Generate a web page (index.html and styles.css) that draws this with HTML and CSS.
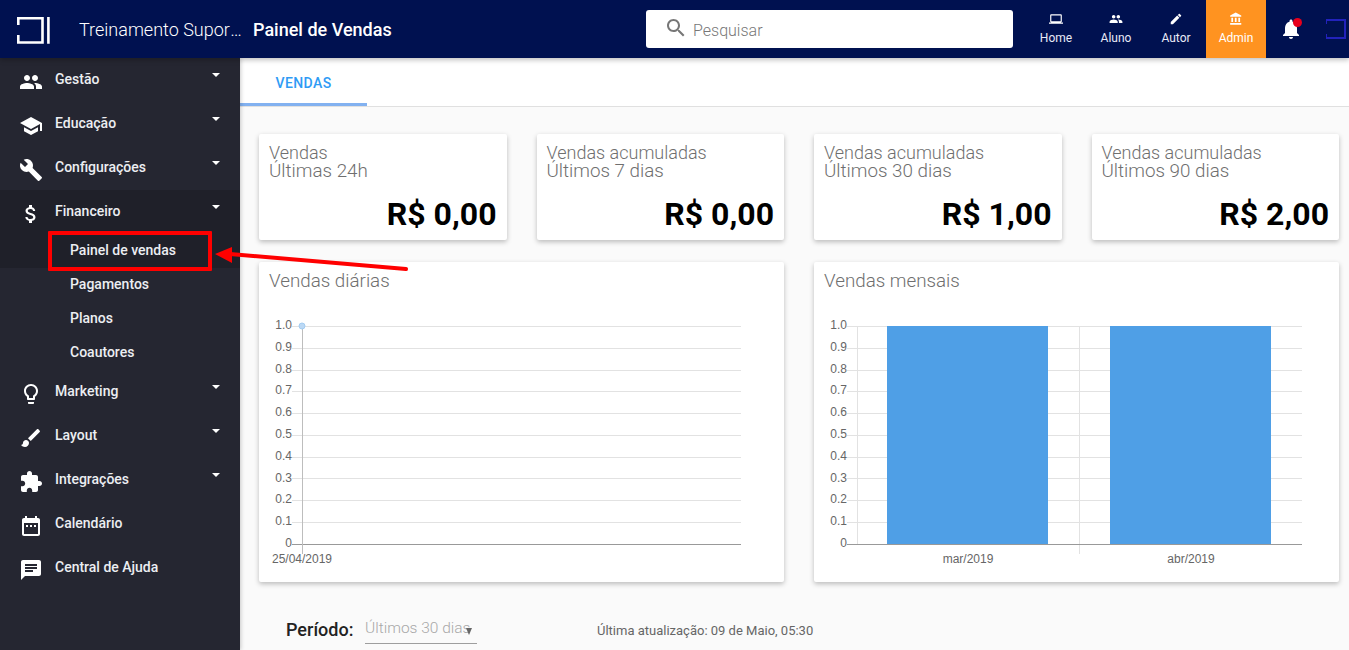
FILE: index.html
```html
<!DOCTYPE html>
<html lang="pt-BR">
<head>
    <meta charset="UTF-8">
    <title>Painel de Vendas</title>
    <link rel="stylesheet" href="styles.css">
</head>
<body>
    <header class="topbar">
        <svg class="logo" viewBox="0 0 33 27"><path d="M1.3 8V1.3H25.5V25.5H1.3V18M31.4 0V26.8" fill="none" stroke="#fff" stroke-width="2.6"/></svg>
        <div class="course">Treinamento Suporte Interno</div>
        <div class="page-title">Painel de Vendas</div>
        <div class="search">
            <svg class="search-icon" viewBox="0 0 24 24"><path d="M15.5 14h-.79l-.28-.27C15.41 12.59 16 11.11 16 9.5 16 5.91 13.09 3 9.5 3S3 5.91 3 9.5 5.91 16 9.5 16c1.61 0 3.09-.59 4.23-1.57l.27.28v.79l5 4.99L20.49 19l-4.99-5zm-6 0C7.01 14 5 11.99 5 9.5S7.01 5 9.5 5 14 7.01 14 9.5 11.99 14 9.5 14z"/></svg>
            <span>Pesquisar</span>
        </div>
        <nav class="topnav">
            <a class="topnav-item"><svg viewBox="0 0 24 24"><path d="M20 18c1.1 0 1.99-.9 1.99-2L22 6c0-1.1-.9-2-2-2H4c-1.1 0-2 .9-2 2v10c0 1.1.9 2 2 2H0v2h24v-2h-4zM4 6h16v10H4V6z"/></svg>Home</a>
            <a class="topnav-item"><svg viewBox="0 0 24 24"><path d="M16 11c1.66 0 2.99-1.34 2.99-3S17.66 5 16 5c-1.66 0-3 1.34-3 3s1.34 3 3 3zm-8 0c1.66 0 2.99-1.34 2.99-3S9.66 5 8 5C6.34 5 5 6.34 5 8s1.34 3 3 3zm0 2c-2.33 0-7 1.17-7 3.5V19h14v-2.5c0-2.33-4.67-3.5-7-3.5zm8 0c-.29 0-.62.02-.97.05 1.16.84 1.97 1.97 1.97 3.45V19h6v-2.5c0-2.33-4.67-3.5-7-3.5z"/></svg>Aluno</a>
            <a class="topnav-item"><svg viewBox="0 0 24 24"><path d="M3 17.25V21h3.75L17.81 9.94l-3.75-3.75L3 17.25zM20.71 7.04c.39-.39.39-1.02 0-1.41l-2.34-2.34c-.39-.39-1.02-.39-1.41 0l-1.83 1.83 3.75 3.75 1.83-1.83z"/></svg>Autor</a>
            <a class="topnav-item active"><svg viewBox="0 0 24 24"><path d="M4 10v7h3v-7H4zm6 0v7h3v-7h-3zM2 22h19v-3H2v3zm14-12v7h3v-7h-3zm-4.5-9L2 6v2h19V6l-9.5-5z"/></svg>Admin</a>
        </nav>
        <div class="bell">
            <svg viewBox="0 0 24 24"><path d="M12 22c1.1 0 2-.9 2-2h-4c0 1.1.89 2 2 2zm6-6v-5c0-3.07-1.64-5.64-4.5-6.32V4c0-.83-.67-1.5-1.5-1.5s-1.5.67-1.5 1.5v.68C7.63 5.36 6 7.92 6 11v5l-2 2v1h16v-1l-2-2z"/></svg>
            <span class="bell-dot"></span>
        </div>
        <svg class="logo-small" viewBox="0 0 24 20"><path d="M0 5V1H19V19H0V15" fill="none" stroke="#2222bb" stroke-width="2"/></svg>
    </header>

    <div class="layout">
        <aside class="sidebar">
            <a class="menu-item"><svg class="menu-icon" viewBox="0 0 24 24"><path d="M16 11c1.66 0 2.99-1.34 2.99-3S17.66 5 16 5c-1.66 0-3 1.34-3 3s1.34 3 3 3zm-8 0c1.66 0 2.99-1.34 2.99-3S9.66 5 8 5C6.34 5 5 6.34 5 8s1.34 3 3 3zm0 2c-2.33 0-7 1.17-7 3.5V19h14v-2.5c0-2.33-4.67-3.5-7-3.5zm8 0c-.29 0-.62.02-.97.05 1.16.84 1.97 1.97 1.97 3.45V19h6v-2.5c0-2.33-4.67-3.5-7-3.5z"/></svg>Gestão<i class="caret"></i></a>
            <a class="menu-item"><svg class="menu-icon" viewBox="0 0 24 24"><path d="M5 13.18v4L12 21l7-3.82v-4L12 17l-7-3.82zM12 3L1 9l11 6 9-4.91V17h2V9L12 3z"/></svg>Educação<i class="caret"></i></a>
            <a class="menu-item"><svg class="menu-icon" viewBox="0 0 24 24"><path d="M22.7 19l-9.1-9.1c.9-2.3.4-5-1.5-6.9-2-2-5-2.4-7.4-1.3L9 6 6 9 1.6 4.7C.4 7.1.9 10.1 2.9 12.1c1.9 1.9 4.6 2.4 6.9 1.5l9.1 9.1c.4.4 1 .4 1.4 0l2.3-2.3c.5-.4.5-1.1.1-1.4z"/></svg>Configurações<i class="caret"></i></a>
            <div class="menu-open">
                <a class="menu-item"><svg class="menu-icon" viewBox="0 0 24 24"><path d="M11.8 10.9c-2.27-.59-3-1.2-3-2.15 0-1.09 1.01-1.85 2.7-1.85 1.78 0 2.44.85 2.5 2.1h2.21c-.07-1.72-1.12-3.3-3.21-3.81V3h-3v2.16c-1.94.42-3.5 1.68-3.5 3.61 0 2.31 1.91 3.46 4.7 4.13 2.5.6 3 1.48 3 2.41 0 .69-.49 1.79-2.7 1.79-2.06 0-2.87-.92-2.98-2.1h-2.2c.12 2.19 1.76 3.42 3.68 3.83V21h3v-2.15c1.95-.37 3.5-1.5 3.5-3.55 0-2.84-2.43-3.81-4.7-4.4z"/></svg>Financeiro<i class="caret"></i></a>
                <a class="submenu-item">Painel de vendas</a>
            </div>
            <a class="submenu-item">Pagamentos</a>
            <a class="submenu-item">Planos</a>
            <a class="submenu-item">Coautores</a>
            <a class="menu-item"><svg class="menu-icon" viewBox="0 0 24 24"><path d="M9 21c0 .55.45 1 1 1h4c.55 0 1-.45 1-1v-1H9v1zm3-19C8.14 2 5 5.14 5 9c0 2.38 1.19 4.47 3 5.74V17c0 .55.45 1 1 1h6c.55 0 1-.45 1-1v-2.26c1.81-1.27 3-3.36 3-5.74 0-3.86-3.14-7-7-7zm2.85 11.1l-.85.6V16h-4v-2.3l-.85-.6C7.8 12.16 7 10.63 7 9c0-2.76 2.24-5 5-5s5 2.24 5 5c0 1.63-.8 3.16-2.15 4.1z"/></svg>Marketing<i class="caret"></i></a>
            <a class="menu-item"><svg class="menu-icon" viewBox="0 0 24 24"><path d="M7 14c-1.66 0-3 1.34-3 3 0 1.31-1.16 2-2 2 .92 1.22 2.49 2 4 2 2.21 0 4-1.79 4-4 0-1.66-1.34-3-3-3zm13.71-9.37l-1.34-1.34c-.39-.39-1.02-.39-1.41 0L9 12.25 11.75 15l8.96-8.96c.39-.39.39-1.02 0-1.41z"/></svg>Layout<i class="caret"></i></a>
            <a class="menu-item"><svg class="menu-icon" viewBox="0 0 24 24"><path d="M20.5 11H19V7c0-1.1-.9-2-2-2h-4V3.5C13 2.12 11.88 1 10.5 1S8 2.12 8 3.5V5H4c-1.1 0-1.99.9-1.99 2v3.8H3.5c1.49 0 2.7 1.21 2.7 2.7s-1.21 2.7-2.7 2.7H2V20c0 1.1.9 2 2 2h3.8v-1.5c0-1.49 1.21-2.7 2.7-2.7 1.49 0 2.7 1.21 2.7 2.7V22H17c1.1 0 2-.9 2-2v-4h1.5c1.38 0 2.5-1.12 2.5-2.5S21.88 11 20.5 11z"/></svg>Integrações<i class="caret"></i></a>
            <a class="menu-item"><svg class="menu-icon" viewBox="0 0 24 24"><path d="M9 11H7v2h2v-2zm4 0h-2v2h2v-2zm4 0h-2v2h2v-2zm2-7h-1V2h-2v2H8V2H6v2H5c-1.11 0-1.99.9-1.99 2L3 20c0 1.1.89 2 2 2h14c1.1 0 2-.9 2-2V6c0-1.1-.9-2-2-2zm0 16H5V9h14v11z"/></svg>Calendário</a>
            <a class="menu-item"><svg class="menu-icon" viewBox="0 0 24 24"><path d="M20 2H4c-1.1 0-1.99.9-1.99 2L2 22l4-4h14c1.1 0 2-.9 2-2V4c0-1.1-.9-2-2-2zM6 9h12v2H6V9zm8 5H6v-2h8v2zm4-6H6V6h12v2z"/></svg>Central de Ajuda</a>
        </aside>

        <main class="main">
            <div class="tabs">
                <a class="tab">VENDAS</a>
            </div>
            <div class="content">
                <section class="stat-row">
                    <div class="card stat">
                        <div class="stat-title">Vendas</div>
                        <div class="stat-period">Últimas 24h</div>
                        <div class="stat-value">R$ 0,00</div>
                    </div>
                    <div class="card stat">
                        <div class="stat-title">Vendas acumuladas</div>
                        <div class="stat-period">Últimos 7 dias</div>
                        <div class="stat-value">R$ 0,00</div>
                    </div>
                    <div class="card stat">
                        <div class="stat-title">Vendas acumuladas</div>
                        <div class="stat-period">Últimos 30 dias</div>
                        <div class="stat-value">R$ 1,00</div>
                    </div>
                    <div class="card stat">
                        <div class="stat-title">Vendas acumuladas</div>
                        <div class="stat-period">Últimos 90 dias</div>
                        <div class="stat-value">R$ 2,00</div>
                    </div>
                </section>

                <section class="chart-row">
                    <div class="card chart">
                        <div class="chart-title">Vendas diárias</div>
                        <svg class="chart-svg" viewBox="259 305 525 272">
                            <g class="grid">
                                <path d="M292 326.5H741M292 348.5H741M292 370.5H741M292 391.5H741M292 413.5H741M292 435.5H741M292 457.5H741M292 478.5H741M292 500.5H741M292 522.5H741"/>
                            </g>
                            <path class="axis" d="M292 544.5H741"/>
                            <path class="axis-light" d="M302.5 326V554"/>
                            <g class="tick-labels">
                                <text x="292" y="329">1.0</text>
                                <text x="292" y="351">0.9</text>
                                <text x="292" y="373">0.8</text>
                                <text x="292" y="394">0.7</text>
                                <text x="292" y="416">0.6</text>
                                <text x="292" y="438">0.5</text>
                                <text x="292" y="460">0.4</text>
                                <text x="292" y="482">0.3</text>
                                <text x="292" y="503">0.2</text>
                                <text x="292" y="525">0.1</text>
                                <text x="292" y="547">0</text>
                            </g>
                            <text class="x-label" x="302" y="563">25/04/2019</text>
                            <circle class="point" cx="302" cy="326" r="3"/>
                        </svg>
                    </div>
                    <div class="card chart">
                        <div class="chart-title">Vendas mensais</div>
                        <svg class="chart-svg" viewBox="814 305 525 272">
                            <g class="grid">
                                <path d="M847 326.5H1302M847 348.5H1302M847 370.5H1302M847 391.5H1302M847 413.5H1302M847 435.5H1302M847 457.5H1302M847 478.5H1302M847 500.5H1302M847 522.5H1302"/>
                                <path d="M857.5 326V544M1079.5 326V554"/>
                            </g>
                            <rect class="bar" x="887" y="326" width="161" height="218"/>
                            <rect class="bar" x="1110" y="326" width="161" height="218"/>
                            <path class="axis" d="M847 544.5H1302"/>
                            <g class="tick-labels">
                                <text x="847" y="329">1.0</text>
                                <text x="847" y="351">0.9</text>
                                <text x="847" y="373">0.8</text>
                                <text x="847" y="394">0.7</text>
                                <text x="847" y="416">0.6</text>
                                <text x="847" y="438">0.5</text>
                                <text x="847" y="460">0.4</text>
                                <text x="847" y="482">0.3</text>
                                <text x="847" y="503">0.2</text>
                                <text x="847" y="525">0.1</text>
                                <text x="847" y="547">0</text>
                            </g>
                            <text class="x-label" x="968" y="563">mar/2019</text>
                            <text class="x-label" x="1191" y="563">abr/2019</text>
                        </svg>
                    </div>
                </section>

                <section class="period-row">
                    <span class="period-label">Período:</span>
                    <div class="period-select"><span>Últimos 30 dias</span><i class="select-caret"></i></div>
                    <span class="updated">Última atualização: 09 de Maio, 05:30</span>
                </section>
            </div>
        </main>
    </div>

    <div class="highlight-box"></div>
    <svg class="highlight-arrow" viewBox="0 0 200 30"><path d="M15 7L191 22" stroke="#f00" stroke-width="4" stroke-linecap="round"/><path d="M0 7L17 0V16Z" fill="#f00"/></svg>
</body>
</html>
```

FILE: styles.css
```css
* {
  box-sizing: border-box;
}

html, body {
  height: 100%;
}

body {
  margin: 0;
  overflow: hidden;
  position: relative;
  font-family: Roboto, "Liberation Sans", sans-serif;
  background-color: #fafafa;
  color: #000;
}

/* top bar */
.topbar {
  height: 58px;
  background-color: #001150;
  display: flex;
  align-items: center;
  position: relative;
  z-index: 2;
  box-shadow: 0 2px 5px rgba(0, 0, 0, 0.25);
  padding-left: 17px;
  overflow: hidden;
}

.logo {
  width: 33px;
  height: 27px;
  flex: none;
  margin-top: 3px;
}

.course {
  width: 165px;
  margin-left: 29px;
  font-size: 18px;
  font-weight: 300;
  color: #fff;
  white-space: nowrap;
  overflow: hidden;
  text-overflow: ellipsis;
  flex: none;
}

.page-title {
  width: 393px;
  margin-left: 9px;
  font-size: 18px;
  font-weight: 500;
  color: #fff;
  flex: none;
}

.search {
  width: 367px;
  height: 38px;
  background-color: #fff;
  border-radius: 3px;
  display: flex;
  align-items: center;
  padding: 2px 0 0 18px;
  font-size: 16px;
  font-weight: 300;
  color: #777;
  flex: none;
}

.search-icon {
  width: 24px;
  height: 24px;
  fill: #777;
  margin-right: 5px;
  margin-top: -4px;
}

.topnav {
  display: flex;
  margin-left: 13px;
  height: 58px;
  flex: none;
}

.topnav-item {
  width: 60px;
  height: 58px;
  display: flex;
  flex-direction: column;
  align-items: center;
  padding-top: 12px;
  font-size: 12px;
  line-height: 14px;
  color: #e8eaf6;
  gap: 5px;
}

.topnav-item svg {
  width: 14px;
  height: 14px;
  fill: #fff;
}

.topnav-item.active {
  background-color: #ff9320;
  color: #fff;
}

.bell {
  width: 50px;
  height: 58px;
  display: flex;
  align-items: center;
  justify-content: center;
  position: relative;
  flex: none;
}

.bell svg {
  width: 24px;
  height: 24px;
  fill: #fff;
}

.bell-dot {
  position: absolute;
  left: 27px;
  top: 18px;
  width: 9px;
  height: 9px;
  border-radius: 50%;
  background-color: #e8001c;
}

.logo-small {
  width: 24px;
  height: 20px;
  margin-left: 10px;
  flex: none;
}

/* side menu */
.layout {
  display: flex;
  height: calc(100% - 58px);
}

.sidebar {
  width: 240px;
  flex: none;
  background-color: #252631;
  box-shadow: 1px 0 4px rgba(0, 0, 0, 0.2);
  position: relative;
  z-index: 1;
}

.menu-item {
  height: 44px;
  display: flex;
  align-items: center;
  padding: 0 0 2px 19px;
  font-size: 14px;
  font-weight: 500;
  color: #eceef2;
  position: relative;
}

.menu-icon {
  width: 24px;
  height: 24px;
  fill: #fff;
  margin-right: 12px;
  margin-top: 6px;
  flex: none;
}

.caret {
  position: absolute;
  right: 20px;
  top: 15px;
  border-left: 4px solid transparent;
  border-right: 4px solid transparent;
  border-top: 4px solid #fff;
}

.menu-open {
  background-color: #1f2029;
}

.submenu-item {
  height: 34px;
  display: flex;
  align-items: center;
  padding: 0 0 2px 70px;
  font-size: 14px;
  font-weight: 500;
  color: #eceef2;
}

/* main area */
.main {
  flex: 1;
  min-width: 0;
}

.tabs {
  height: 49px;
  background-color: #fff;
  border-bottom: 1px solid #e0e0e0;
}

.tab {
  display: flex;
  align-items: center;
  justify-content: center;
  width: 127px;
  height: 48px;
  padding-top: 4px;
  font-size: 14px;
  font-weight: 500;
  letter-spacing: 0.4px;
  color: #2f9bf5;
  border-bottom: 3px solid #82b1f0;
}

.content {
  padding: 27px 10px 0 19px;
}

.card {
  background-color: #fff;
  border-radius: 2px;
  box-shadow: 0 2px 5px rgba(0, 0, 0, 0.25);
}

.stat-row {
  display: grid;
  grid-template-columns: repeat(4, 1fr);
  gap: 30px;
}

.stat {
  height: 106px;
  padding: 10px 10px 0;
}

.stat-title,
.stat-period {
  font-size: 18px;
  line-height: 18px;
  font-weight: 300;
  color: #6f6f6f;
}

.stat-period {
  font-size: 18.8px;
}

.stat-value {
  margin-top: 14px;
  text-align: right;
  font-size: 32px;
  line-height: 40px;
  font-weight: 700;
}

.chart-row {
  display: grid;
  grid-template-columns: repeat(2, 1fr);
  gap: 30px;
  margin-top: 22px;
}

.chart {
  height: 320px;
  padding-top: 8px;
}

.chart-title {
  padding-left: 10px;
  height: 35px;
  font-size: 18.8px;
  line-height: 22px;
  font-weight: 300;
  color: #6f6f6f;
}

.chart-svg {
  display: block;
  width: 525px;
  height: 272px;
  font-family: "Liberation Sans", Arial, sans-serif;
}

.grid path {
  stroke: #e2e2e2;
  stroke-width: 1;
  fill: none;
}

.axis {
  stroke: #999;
  stroke-width: 1;
  fill: none;
}

.axis-light {
  stroke: #bdbdbd;
  stroke-width: 1;
  fill: none;
}

.tick-labels text {
  font-size: 12px;
  fill: #666;
  text-anchor: end;
}

.x-label {
  font-size: 12px;
  fill: #666;
  text-anchor: middle;
}

.point {
  fill: #bcd9f5;
  stroke: #a4cdf2;
  stroke-width: 1;
}

.bar {
  fill: #4f9fe6;
}

.period-row {
  display: flex;
  align-items: flex-start;
  margin-top: 35px;
  padding-left: 27px;
}

.period-label {
  font-size: 18px;
  line-height: 24px;
  padding-top: 1px;
  font-weight: 500;
  color: #222;
  width: 79px;
}

.period-select {
  width: 112px;
  height: 27px;
  position: relative;
  font-size: 15.5px;
  font-weight: 300;
  line-height: 22px;
  color: #a8a8a8;
  border-bottom: 1px solid #9e9e9e;
}

.select-caret {
  position: absolute;
  left: 101px;
  top: 11px;
  border-left: 3.5px solid transparent;
  border-right: 3.5px solid transparent;
  border-top: 7px solid #666;
}

.updated {
  margin-left: 120px;
  padding-top: 6px;
  font-size: 13px;
  line-height: 16px;
  font-weight: 400;
  color: #666;
}

/* red markup on top of the screenshot */
.highlight-box {
  position: absolute;
  left: 48px;
  top: 231px;
  width: 164px;
  height: 40px;
  border: 4px solid #f00;
  border-radius: 1px;
  z-index: 3;
}

.highlight-arrow {
  position: absolute;
  left: 215px;
  top: 247px;
  width: 200px;
  height: 30px;
  z-index: 3;
}
```
